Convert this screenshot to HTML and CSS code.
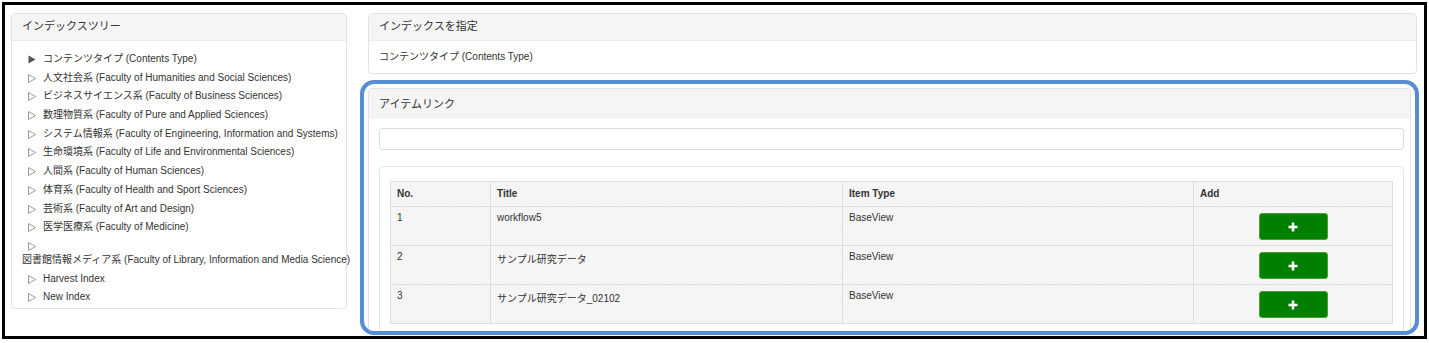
FILE: index.html
```html
<!DOCTYPE html>
<html lang="ja">
<head>
  <meta charset="UTF-8">
  <title>アイテムリンク</title>
  <link rel="stylesheet" href="styles.css">
</head>
<body>
  <div class="frame">
    <div class="side">
      <div class="panel">
        <div class="panel-heading">インデックスツリー</div>
        <ul class="tree">
          <li><span class="caret"><svg width="8" height="9" viewBox="0 0 8 9"><path d="M0.5 0.5 L7.5 4.5 L0.5 8.5 Z" fill="#555"/></svg></span><span class="label">コンテンツタイプ (Contents Type)</span></li>
          <li><span class="caret"><svg width="8" height="9" viewBox="0 0 8 9"><path d="M0.5 0.5 L7.5 4.5 L0.5 8.5 Z" fill="none" stroke="#999"/></svg></span><span class="label">人文社会系 (Faculty of Humanities and Social Sciences)</span></li>
          <li><span class="caret"><svg width="8" height="9" viewBox="0 0 8 9"><path d="M0.5 0.5 L7.5 4.5 L0.5 8.5 Z" fill="none" stroke="#999"/></svg></span><span class="label">ビジネスサイエンス系 (Faculty of Business Sciences)</span></li>
          <li><span class="caret"><svg width="8" height="9" viewBox="0 0 8 9"><path d="M0.5 0.5 L7.5 4.5 L0.5 8.5 Z" fill="none" stroke="#999"/></svg></span><span class="label">数理物質系 (Faculty of Pure and Applied Sciences)</span></li>
          <li><span class="caret"><svg width="8" height="9" viewBox="0 0 8 9"><path d="M0.5 0.5 L7.5 4.5 L0.5 8.5 Z" fill="none" stroke="#999"/></svg></span><span class="label">システム情報系 (Faculty of Engineering, Information and Systems)</span></li>
          <li><span class="caret"><svg width="8" height="9" viewBox="0 0 8 9"><path d="M0.5 0.5 L7.5 4.5 L0.5 8.5 Z" fill="none" stroke="#999"/></svg></span><span class="label">生命環境系 (Faculty of Life and Environmental Sciences)</span></li>
          <li><span class="caret"><svg width="8" height="9" viewBox="0 0 8 9"><path d="M0.5 0.5 L7.5 4.5 L0.5 8.5 Z" fill="none" stroke="#999"/></svg></span><span class="label">人間系 (Faculty of Human Sciences)</span></li>
          <li><span class="caret"><svg width="8" height="9" viewBox="0 0 8 9"><path d="M0.5 0.5 L7.5 4.5 L0.5 8.5 Z" fill="none" stroke="#999"/></svg></span><span class="label">体育系 (Faculty of Health and Sport Sciences)</span></li>
          <li><span class="caret"><svg width="8" height="9" viewBox="0 0 8 9"><path d="M0.5 0.5 L7.5 4.5 L0.5 8.5 Z" fill="none" stroke="#999"/></svg></span><span class="label">芸術系 (Faculty of Art and Design)</span></li>
          <li><span class="caret"><svg width="8" height="9" viewBox="0 0 8 9"><path d="M0.5 0.5 L7.5 4.5 L0.5 8.5 Z" fill="none" stroke="#999"/></svg></span><span class="label">医学医療系 (Faculty of Medicine)</span></li>
          <li><span class="caret"><svg width="8" height="9" viewBox="0 0 8 9"><path d="M0.5 0.5 L7.5 4.5 L0.5 8.5 Z" fill="none" stroke="#999"/></svg></span><span class="label">図書館情報メディア系 (Faculty of Library, Information and Media Science)</span></li>
          <li><span class="caret"><svg width="8" height="9" viewBox="0 0 8 9"><path d="M0.5 0.5 L7.5 4.5 L0.5 8.5 Z" fill="none" stroke="#999"/></svg></span><span class="label">Harvest Index</span></li>
          <li><span class="caret"><svg width="8" height="9" viewBox="0 0 8 9"><path d="M0.5 0.5 L7.5 4.5 L0.5 8.5 Z" fill="none" stroke="#999"/></svg></span><span class="label">New Index</span></li>
        </ul>
      </div>
    </div>

    <div class="main">
      <div class="panel">
        <div class="panel-heading">インデックスを指定</div>
        <div class="panel-body">コンテンツタイプ (Contents Type)</div>
      </div>

      <div class="highlight">
        <div class="panel link-panel">
          <div class="panel-heading">アイテムリンク</div>
          <div class="link-body">
            <div class="search-box"></div>
            <div class="inner-panel">
              <table class="items">
                <thead>
                  <tr>
                    <th class="col-no">No.</th>
                    <th class="col-title">Title</th>
                    <th class="col-type">Item Type</th>
                    <th class="col-add">Add</th>
                  </tr>
                </thead>
                <tbody>
                  <tr>
                    <td>1</td>
                    <td>workflow5</td>
                    <td>BaseView</td>
                    <td class="add"><button type="button" class="btn-add"><svg width="10" height="10" viewBox="0 0 10 10"><path d="M5 0.5 V9.5 M0.5 5 H9.5" stroke="#fff" stroke-width="2.6"/></svg></button></td>
                  </tr>
                  <tr>
                    <td>2</td>
                    <td>サンプル研究データ</td>
                    <td>BaseView</td>
                    <td class="add"><button type="button" class="btn-add"><svg width="10" height="10" viewBox="0 0 10 10"><path d="M5 0.5 V9.5 M0.5 5 H9.5" stroke="#fff" stroke-width="2.6"/></svg></button></td>
                  </tr>
                  <tr>
                    <td>3</td>
                    <td>サンプル研究データ_02102</td>
                    <td>BaseView</td>
                    <td class="add"><button type="button" class="btn-add"><svg width="10" height="10" viewBox="0 0 10 10"><path d="M5 0.5 V9.5 M0.5 5 H9.5" stroke="#fff" stroke-width="2.6"/></svg></button></td>
                  </tr>
                </tbody>
              </table>
            </div>
          </div>
        </div>
      </div>
    </div>
  </div>
</body>
</html>
```

FILE: styles.css
```css
body {
  margin: 0;
  background: #fff;
  font-family: "Liberation Sans", Arial, "Noto Sans CJK JP", sans-serif;
  font-size: 10px;
  color: #333;
}
.frame {
  box-sizing: border-box;
  width: 1425px;
  height: 337px;
  margin: 2px;
  border: 3px solid #000;
  padding: 8px 7px 0 6px;
  display: flex;
  gap: 21px;
  overflow: hidden;
}
.side {
  width: 336px;
  flex: none;
}
.main {
  flex: 1;
  min-width: 0;
}
.panel {
  background: #fff;
  border: 1px solid #e3e3e3;
  border-radius: 4px;
}
.panel-heading {
  background: #f5f5f5;
  border-bottom: 1px solid #ececec;
  border-radius: 4px 4px 0 0;
  padding: 0 10px;
  height: 26px;
  line-height: 25px;
  font-size: 11px;
  color: #333;
}
.panel-body {
  padding: 0 10px;
  height: 32px;
  line-height: 32px;
}
.tree {
  list-style: none;
  margin: 0;
  padding: 11px 4px 4px 10px;
}
.tree li {
  line-height: 14px;
  margin-bottom: 4.7px;
}
.tree li:last-child {
  margin-bottom: 0;
}
.caret {
  display: inline-block;
  vertical-align: top;
  width: 15px;
  height: 14px;
  margin-left: 6px;
}
.caret svg {
  display: block;
  margin-top: 3px;
}
.label {
  display: inline-block;
  vertical-align: top;
  height: 14px;
  white-space: nowrap;
}

/* blue highlight round the item link panel */
.highlight {
  box-sizing: border-box;
  height: 255px;
  margin: 6px -2px 0 -8px;
  border: 4px solid #568dd4;
  border-radius: 14px;
  padding: 4px 4px 0 4px;
  overflow: hidden;
}
.link-panel {
  height: 280px;
}
.link-panel .panel-heading {
  height: 28px;
  line-height: 30px;
}
.link-body {
  padding: 10px 6px 0 10px;
}
.search-box {
  height: 20px;
  border: 1px solid #ddd;
  border-radius: 3px;
  background: #fff;
}
.inner-panel {
  margin-top: 16px;
  border: 1px solid #e5e5e5;
  border-radius: 4px;
  padding: 14px 10px 10px 10px;
}
.items {
  width: 100%;
  border-collapse: collapse;
  background-color: #f6f6f6;
  background-image: radial-gradient(#ececec 0.6px, transparent 0.8px);
  background-size: 3px 3px;
}
.items th,
.items td {
  border: 1px solid #dedede;
  text-align: left;
  vertical-align: top;
  padding: 0 6px;
}
.items th {
  height: 24px;
  line-height: 24px;
  font-weight: bold;
}
.items td {
  height: 39px;
  padding-top: 5px;
  box-sizing: border-box;
}
.col-no { width: 87px; }
.col-title { width: 339px; }
.col-type { width: 338px; }
.items td.add {
  text-align: center;
  padding-top: 6px;
}
.btn-add {
  width: 69px;
  height: 27px;
  padding: 0;
  background: #008000;
  border: 1px solid #4aa02c;
  border-radius: 3px;
  cursor: pointer;
}
.btn-add svg {
  display: block;
  margin: 0 auto;
}
```
